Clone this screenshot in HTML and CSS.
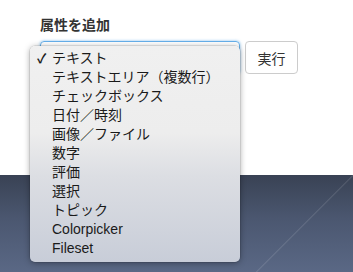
FILE: index.html
```html
<!DOCTYPE html>
<html>
<head>
    <title>属性を追加</title>
    <link rel="stylesheet" href="styles.css">
</head>
<body>
    <div class="page">
        <div class="panel">
            <p class="label">属性を追加</p>
            <div class="row">
                <div class="select-wrap">
                    <div class="select"></div>
                    <ul class="menu">
                        <li class="checked">テキスト</li>
                        <li>テキストエリア（複数行）</li>
                        <li>チェックボックス</li>
                        <li>日付／時刻</li>
                        <li>画像／ファイル</li>
                        <li>数字</li>
                        <li>評価</li>
                        <li>選択</li>
                        <li>トピック</li>
                        <li>Colorpicker</li>
                        <li>Fileset</li>
                    </ul>
                </div>
                <button class="run">実行</button>
            </div>
        </div>
        <div class="desk"></div>
    </div>
</body>
</html>
```

FILE: styles.css
```css
body {
    margin: 0;
    font-family: "Liberation Sans", "Noto Sans CJK JP", sans-serif;
    color: #222;
}
.page {
    width: 353px;
    height: 272px;
    display: flex;
    flex-direction: column;
}
.panel {
    height: 175px;
    background: #fff;
    padding: 16px 0 0 40px;
    box-sizing: border-box;
}
.label {
    margin: 0 0 7px 0;
    font-size: 14px;
    line-height: 18px;
    font-weight: bold;
    color: #333;
}
.row {
    display: flex;
    gap: 5px;
}
.select-wrap {
    position: relative;
}
.select {
    width: 198px;
    height: 31px;
    border: 1px solid #66afe9;
    border-radius: 4px;
    box-shadow: 0 0 3px rgba(102, 175, 233, 0.8);
}
.run {
    width: 53px;
    height: 33px;
    border: 1px solid #ccc;
    border-radius: 4px;
    background: #fff;
    font-family: inherit;
    font-size: 14px;
    color: #333;
    padding: 0;
}
.desk {
    flex: 1;
    background:
        linear-gradient(135deg, transparent 78.2%, rgba(255, 255, 255, 0.12) 78.5%, transparent 78.9%),
        linear-gradient(180deg, #394254 0%, #4b5770 45%, #5a6885 100%);
}
.menu {
    position: absolute;
    left: -10px;
    top: 5px;
    width: 210px;
    margin: 0;
    padding: 3px 0 4px;
    list-style: none;
    border-radius: 5px;
    background: linear-gradient(180deg, #f0f0f0 0%, #ededed 40%, #dcdee3 60%, #c8cdd8 100%);
    box-shadow: 0 1px 6px rgba(0, 0, 0, 0.35), 0 0 0 0.5px rgba(0, 0, 0, 0.15);
}
.menu li {
    height: 19px;
    line-height: 19px;
    padding-left: 22px;
    font-size: 14px;
    color: #1a1a1a;
    white-space: nowrap;
}
.menu li.checked {
    position: relative;
}
.menu li.checked::before {
    content: "✓";
    position: absolute;
    left: 7px;
    font-size: 13px;
    font-weight: bold;
}
```
